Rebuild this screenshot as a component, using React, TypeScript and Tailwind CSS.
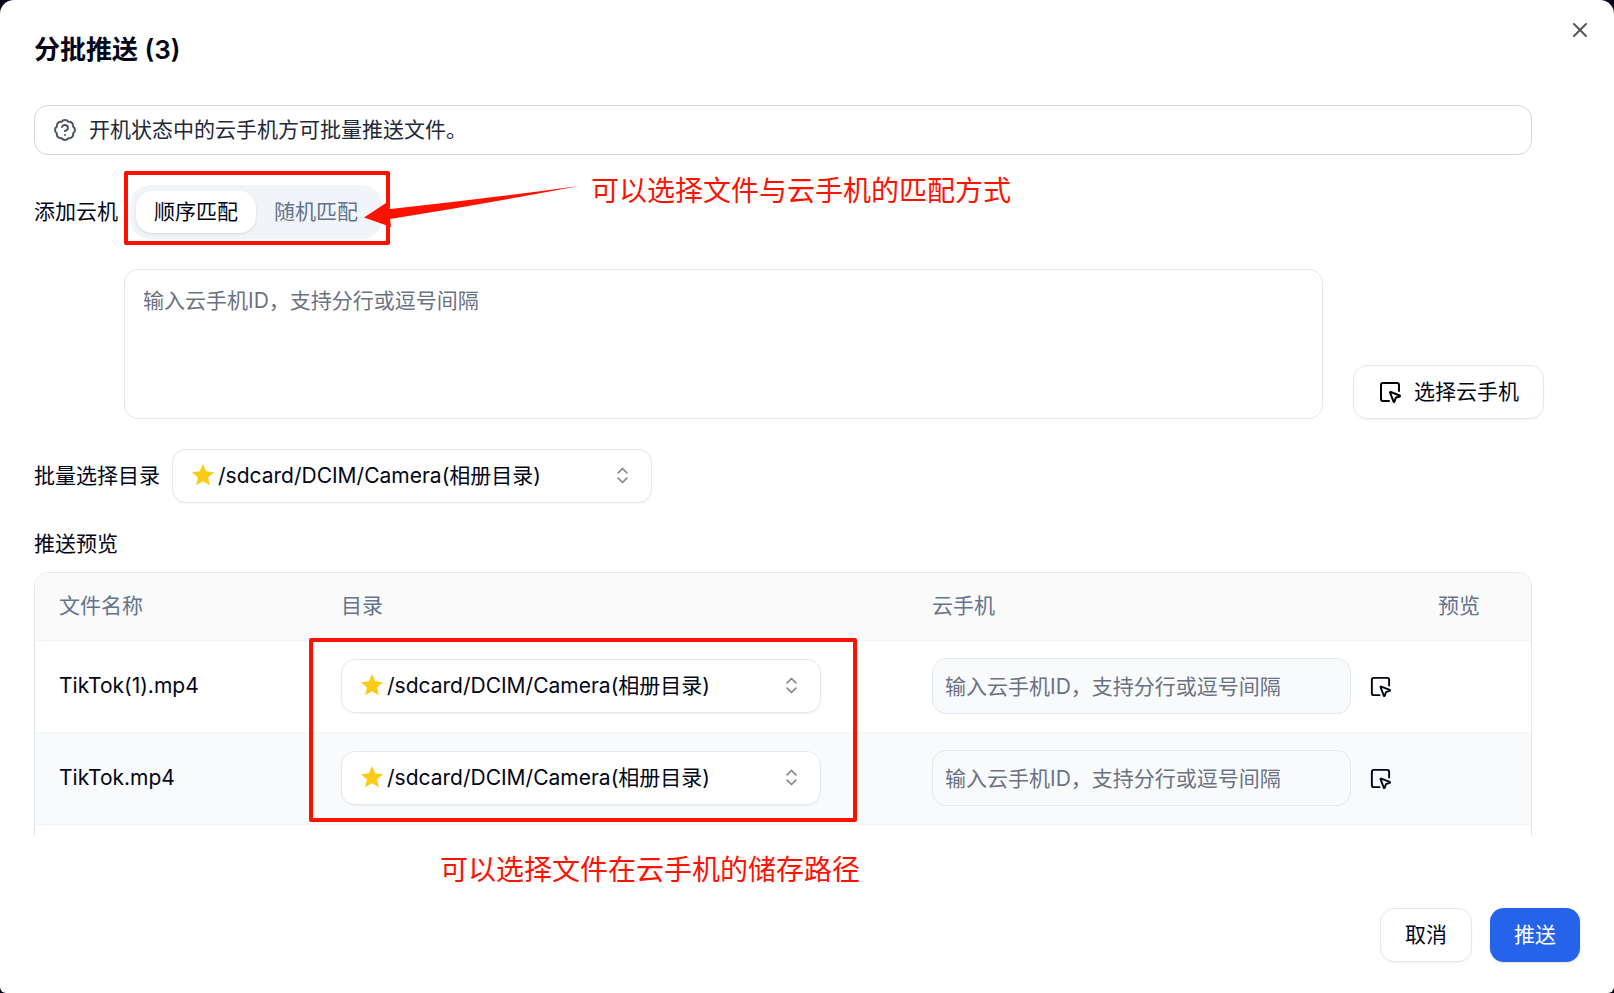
import { useState } from "react";
import {
	BadgeQuestionMark,
	ChevronsUpDown,
	SquareMousePointer,
	X,
} from "lucide-react";

const ID_PLACEHOLDER = "输入云手机ID，支持分行或逗号间隔";

const matchModes = [
	{ value: "order", label: "顺序匹配" },
	{ value: "random", label: "随机匹配" },
];

const directories = ["/sdcard/DCIM/Camera(相册目录)"];

const files = ["TikTok(1).mp4", "TikTok.mp4"];

function StarIcon() {
	return (
		<svg
			className="pointer-events-none absolute top-[15px] left-5 size-[22px]"
			viewBox="0 0 20 20"
			fill="#facc15"
			aria-hidden="true"
		>
			<path d="M10 0l2.9 6.7 7.1.7-5.4 4.8 1.6 7.2L10 15.7l-6.2 3.7 1.6-7.2L0 7.4l7.1-.7z" />
		</svg>
	);
}

function DirectorySelect({ id, label }: { id: string; label?: string }) {
	return (
		<div className="relative w-[480px]">
			<StarIcon />
			<select
				id={id}
				aria-label={label}
				className="h-[54px] w-full appearance-none rounded-[14px] border border-slate-200 bg-transparent pr-12 pl-[45px] shadow-xs"
			>
				{directories.map((directory) => (
					<option key={directory}>{directory}</option>
				))}
			</select>
			<ChevronsUpDown className="pointer-events-none absolute top-4 right-[19px] size-[21px] text-[#858992]" />
		</div>
	);
}

function Annotation({ children }: { children: string }) {
	return (
		<p className="text-[28px] leading-10 whitespace-nowrap text-[#ff1100]">
			{children}
		</p>
	);
}

function MatchModeTabs() {
	const [mode, setMode] = useState("order");

	return (
		<div className="relative ml-3">
			<div
				role="tablist"
				aria-label="添加云机"
				className="flex rounded-[20px] bg-slate-100 p-1.5"
			>
				{matchModes.map(({ value, label }) => (
					<button
						key={value}
						type="button"
						role="tab"
						aria-selected={mode === value}
						onClick={() => setMode(value)}
						className={
							mode === value
								? "h-[42px] rounded-[16px] bg-white px-[18px] shadow-sm"
								: "h-[42px] rounded-[16px] px-[18px] text-slate-500"
						}
					>
						{label}
					</button>
				))}
			</div>
			<div className="pointer-events-none absolute -top-3.5 -right-2 -bottom-1.5 -left-1.5 rounded-xs border-4 border-[#ff1100]" />
			<div className="pointer-events-none absolute top-0 left-[234px] flex items-start">
				<svg width="215" height="42" viewBox="0 0 215 42" aria-hidden="true">
					<path
						d="M0 32.5L22 18V24.5Q120 14 215 1Q120 19 26 34L27 42z"
						fill="#ff1100"
					/>
				</svg>
				<div className="-mt-3.5 ml-3">
					<Annotation>可以选择文件与云手机的匹配方式</Annotation>
				</div>
			</div>
		</div>
	);
}

function PreviewTable() {
	return (
		<div className="relative mt-3">
			<div className="h-[264px] overflow-hidden">
				<div className="h-[300px] overflow-hidden rounded-[14px] border border-slate-200">
					<table className="w-full table-fixed text-left">
						<thead className="bg-[#fafafa] text-slate-500">
							<tr className="h-[67px] border-b border-slate-100">
								<th className="w-[282px] px-6 font-normal">文件名称</th>
								<th className="w-[591px] px-6 font-normal">目录</th>
								<th className="px-6 font-normal">云手机</th>
								<th className="w-[117px] px-6 font-normal">预览</th>
							</tr>
						</thead>
						<tbody>
							{files.map((file) => (
								<tr
									key={file}
									className="h-[92px] border-b border-slate-100 even:bg-slate-50"
								>
									<td className="px-6">{file}</td>
									<td className="px-6">
										<div className="w-[480px] rounded-[14px] bg-white">
											<DirectorySelect
												id={`directory-${file}`}
												label={`${file} 目录`}
											/>
										</div>
									</td>
									<td className="pl-6">
										<div className="flex items-center gap-[18px]">
											<input
												type="text"
												aria-label={`${file} 云手机`}
												placeholder={ID_PLACEHOLDER}
												className="h-14 w-[419px] rounded-[14px] border border-slate-200 bg-slate-50 px-3 placeholder:text-gray-500"
											/>
											<button type="button" aria-label="选择云手机">
												<SquareMousePointer className="size-[23px]" />
											</button>
										</div>
									</td>
									<td />
								</tr>
							))}
						</tbody>
					</table>
				</div>
			</div>
			<div className="pointer-events-none absolute top-[66px] left-[275px] h-[184px] w-[548px] rounded-xs border-4 border-[#ff1100]" />
		</div>
	);
}

export default function App() {
	return (
		<div className="min-h-screen bg-[#020617]">
			<div
				role="dialog"
				aria-labelledby="dialog-title"
				className="relative flex min-h-screen flex-col rounded-t-[14px] rounded-b-md bg-white px-[34px] pt-8 pb-[31px] font-['Inter','Noto_Sans_CJK_SC',sans-serif] text-[21px] leading-8 text-slate-950"
			>
				<h2 id="dialog-title" className="text-[26px] leading-9 font-semibold">
					分批推送 (3)
				</h2>
				<button
					type="button"
					aria-label="关闭"
					className="absolute top-[18px] right-[22px] text-[#53555f]"
				>
					<X className="size-6" />
				</button>

				<div className="mt-[37px] mr-12 flex h-[50px] items-center gap-3 rounded-[14px] border border-gray-300 px-[18px] text-gray-800">
					<BadgeQuestionMark className="size-6 text-gray-600" />
					<p>开机状态中的云手机方可批量推送文件。</p>
				</div>

				<div className="mt-[30px] flex items-center">
					<span>添加云机</span>
					<MatchModeTabs />
				</div>

				<div className="mt-[30px] mr-9 flex items-end gap-[30px] pl-[90px]">
					<textarea
						aria-label="云手机ID"
						placeholder={ID_PLACEHOLDER}
						className="h-[150px] flex-1 resize-none rounded-[14px] border border-slate-200 px-[18px] py-[15px] placeholder:text-gray-500"
					/>
					<button
						type="button"
						className="flex h-[54px] items-center gap-3 rounded-[14px] border border-slate-200 px-6 shadow-xs"
					>
						<SquareMousePointer className="size-6 text-black" />
						选择云手机
					</button>
				</div>

				<div className="mt-[30px] flex items-center gap-3">
					<label htmlFor="directory">批量选择目录</label>
					<DirectorySelect id="directory" />
				</div>

				<div className="mt-[25px] mr-12">
					<h3>推送预览</h3>
					<PreviewTable />
				</div>

				<div className="mt-3.5 pl-[406px]">
					<Annotation>可以选择文件在云手机的储存路径</Annotation>
				</div>

				<div className="mt-auto flex justify-end gap-[18px]">
					<button
						type="button"
						className="h-[54px] rounded-[14px] border border-slate-200 px-6 shadow-xs"
					>
						取消
					</button>
					<button
						type="button"
						className="h-[54px] rounded-[14px] bg-[#2563eb] px-6 text-slate-50 shadow-sm"
					>
						推送
					</button>
				</div>
			</div>
		</div>
	);
}
